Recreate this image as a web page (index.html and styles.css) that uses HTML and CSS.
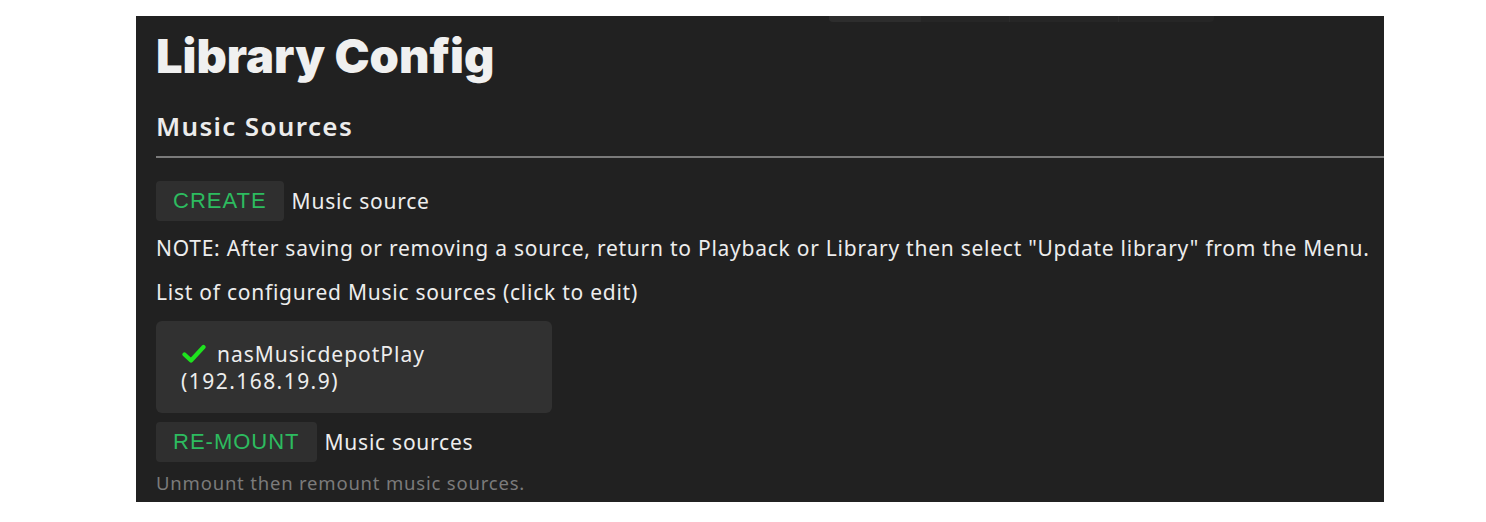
FILE: index.html
```html
<!DOCTYPE html>
<html>
<head>
<meta charset="utf-8">
<link rel="stylesheet" href="styles.css">
</head>
<body>
<div class="panel">
  <div class="tabs">
    <div class="tab active"></div>
    <div class="tab"></div>
    <div class="tab"></div>
    <div class="tab"></div>
  </div>
  <h1 class="title">Library Config</h1>
  <h2 class="section">Music Sources</h2>
  <div class="row">
    <button class="btn">CREATE</button>
    <span class="label">Music source</span>
  </div>
  <p class="text note">NOTE: After saving or removing a source, return to Playback or Library then select "Update library" from the Menu.</p>
  <p class="text list">List of configured Music sources (click to edit)</p>
  <div class="card">
    <div class="card-line">
      <svg class="check" viewBox="0 0 24 20" width="24" height="20"><path d="M2.5 10.5 L9 16.5 L21.5 3" fill="none" stroke="#1ee21e" stroke-width="4.2" stroke-linecap="round" stroke-linejoin="round"/></svg>
      <span>nasMusicdepotPlay</span>
    </div>
    <div class="card-sub">(192.168.19.9)</div>
  </div>
  <div class="row row2">
    <button class="btn">RE-MOUNT</button>
    <span class="label">Music sources</span>
  </div>
  <p class="hint">Unmount then remount music sources.</p>
</div>
</body>
</html>
```

FILE: styles.css
```css
html, body {
  margin: 0;
  padding: 0;
  background: #ffffff;
}
body {
  padding: 16px 0 0 136px;
  font-family: "Noto Sans", sans-serif;
}
.panel {
  position: relative;
  width: 1248px;
  height: 486px;
  background: #212121;
  box-sizing: border-box;
  padding: 0 0 0 20px;
  overflow: hidden;
  color: #ededed;
}
.tabs {
  position: absolute;
  top: 0;
  left: 693px;
  display: flex;
  height: 6px;
  background: #262626;
  border-radius: 0 0 4px 4px;
}
.tab {
  width: 91px;
  height: 6px;
  border-left: 1px solid #2c2c2c;
}
.tab:first-child { border-left: none; border-radius: 0 0 0 4px; }
.tab:nth-child(2) { width: 88px; }
.tab:nth-child(3) { width: 108px; }
.tab:nth-child(4) { width: 95px; }
.tab.active { background: #2d2d2d; }
.title {
  margin: 0;
  padding-top: 12px;
  font-family: "Inter", sans-serif;
  font-weight: 900;
  font-size: 47px;
  line-height: 56px;
  color: #f0f0f0;
  letter-spacing: 0;
}
.section {
  margin: 0;
  padding-top: 25px;
  padding-bottom: 13px;
  font-family: "Noto Sans", sans-serif;
  font-weight: 600;
  font-size: 26px;
  letter-spacing: 1.35px;
  line-height: 34px;
  color: #ececec;
  border-bottom: 2px solid #7a7a7a;
}
.row {
  display: flex;
  align-items: center;
  gap: 8px;
  margin-top: 23px;
}
.btn {
  height: 40px;
  padding: 0 17px 0 17px;
  background: #2f2f2f;
  border: none;
  border-radius: 4px;
  color: #2dbb5f;
  font-family: "Liberation Sans", Arial, sans-serif;
  font-size: 22px;
  letter-spacing: 1px;
  line-height: 40px;
}
.label {
  font-size: 21px;
  letter-spacing: 0.75px;
  color: #ededed;
}
.text {
  margin: 0;
  font-size: 21px;
  letter-spacing: 0.75px;
  line-height: 22px;
  color: #ededed;
}
.note { margin-top: 16px; }
.list { margin-top: 22px; }
.card {
  width: 396px;
  height: 92px;
  box-sizing: border-box;
  margin-top: 18px;
  padding: 20px 25px 0;
  background: #313131;
  border-radius: 6px;
  font-size: 21px;
  letter-spacing: 0.75px;
  color: #ededed;
}
.card-line {
  display: flex;
  align-items: center;
  gap: 11px;
  line-height: 26px;
  margin-left: 1px;
}
.card-line span { letter-spacing: 1px; }
.card-sub {
  line-height: 28px;
  letter-spacing: 1.45px;
}
.row2 { margin-top: 9px; }
.hint {
  margin: 10px 0 0;
  font-size: 18.5px;
  letter-spacing: 0.8px;
  line-height: 22px;
  color: #7b7b7b;
}
```
